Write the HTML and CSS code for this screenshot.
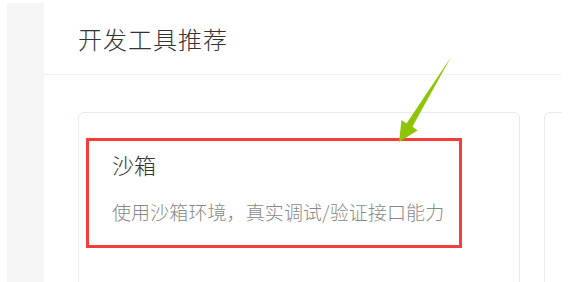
FILE: index.html
```html
<!DOCTYPE html>
<html lang="zh-CN">
<head>
<meta charset="utf-8">
<title>开发工具推荐</title>
<link rel="stylesheet" href="styles.css">
</head>
<body>
<div class="page">
  <aside class="sidebar"></aside>
  <main class="main">
    <header class="header"><h1 class="title">开发工具推荐</h1></header>
    <section class="cards">
      <div class="card">
        <div class="card-name">沙箱</div>
        <div class="card-desc">使用沙箱环境，真实调试/验证接口能力</div>
        <div class="highlight"></div>
      </div>
      <div class="card"></div>
    </section>
  </main>
  <svg class="arrow" width="572" height="282" viewBox="0 0 572 282">
    <polygon points="451,57 412.5,126.5 417.5,130.5 399,142 401.5,120 406.5,123.5" fill="#8dc505"/>
  </svg>
</div>
</body>
</html>
```
FILE: styles.css
```css
html, body {
  margin: 0;
  padding: 0;
  background: #fff;
}
body {
  font-family: "Noto Sans CJK SC", "Noto Sans", sans-serif;
}
.page {
  position: relative;
  display: flex;
  width: 572px;
  height: 282px;
  padding: 3px 0 0 7px;
  box-sizing: border-box;
  overflow: hidden;
}
.sidebar {
  width: 37px;
  flex: none;
  background: #f5f5f5;
}
.main {
  width: 518px;
  flex: none;
  display: flex;
  flex-direction: column;
  overflow: hidden;
}
.header {
  height: 71px;
  flex: none;
  display: flex;
  align-items: center;
  padding-left: 34px;
  border-bottom: 1px solid #f0f1f3;
}
.title {
  margin: 0;
  font-size: 24px;
  font-weight: 300;
  line-height: 32px;
  color: #333;
  letter-spacing: 1px;
}
.cards {
  display: flex;
  gap: 24px;
  padding: 37px 0 0 34px;
}
.card {
  position: relative;
  flex: none;
  width: 442px;
  height: 300px;
  border: 1px solid #e6eaf2;
  border-radius: 6px;
  padding: 36px 0 0 33px;
  box-sizing: border-box;
}
.card-name {
  font-size: 22px;
  font-weight: 300;
  line-height: 30px;
  color: #333;
}
.card-desc {
  margin-top: 20px;
  font-size: 19px;
  font-weight: 300;
  line-height: 26px;
  color: #888;
  letter-spacing: 0.1px;
}
.highlight {
  position: absolute;
  left: 7px;
  top: 25px;
  width: 376px;
  height: 110px;
  border: 3px solid #f73c3c;
  box-sizing: border-box;
}
.arrow {
  position: absolute;
  left: 0;
  top: 0;
  pointer-events: none;
}
```
